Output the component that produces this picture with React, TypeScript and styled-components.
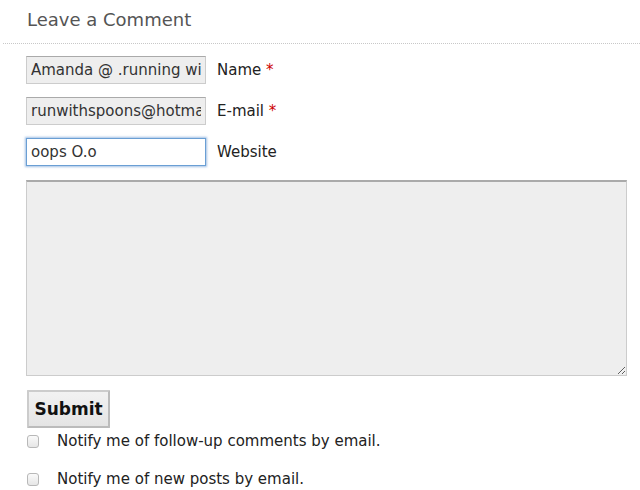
import React from "react";
import styled, { createGlobalStyle } from "styled-components";

const Global = createGlobalStyle`
  html, body { margin: 0; padding: 0; background: #fff; }
  body { font-family: "DejaVu Sans", Verdana, sans-serif; color: #222; }
`;

const Wrap = styled.div`
  width: 640px;
  height: 490px;
  overflow: hidden;
  padding-left: 3px;
  box-sizing: border-box;
`;

const Title = styled.h3`
  margin: 0;
  padding: 9px 0 12px 24px;
  font-size: 18px;
  line-height: 22px;
  font-weight: normal;
  color: #555;
  border-bottom: 1px dotted #c8c8c8;
`;

const Form = styled.form`
  display: flex;
  flex-direction: column;
  padding: 12px 0 0 23px;
`;

const Row = styled.div`
  display: flex;
  align-items: center;
  gap: 11px;
  height: 28px;
  margin-bottom: 13px;
`;

const TextInput = styled.input<{ $focus?: boolean }>`
  box-sizing: border-box;
  width: 180px;
  height: 28px;
  margin: 0;
  padding: 0 4px;
  font-family: "DejaVu Sans", Verdana, sans-serif;
  font-size: 15px;
  color: #333;
  background: ${(p) => (p.$focus ? "#fff" : "#eee")};
  border: 1px solid ${(p) => (p.$focus ? "#6a9fd4" : "#ccc")};
  border-top-color: ${(p) => (p.$focus ? "#6a9fd4" : "#aaa")};
  box-shadow: ${(p) => (p.$focus ? "0 0 2px 1px rgba(100,150,210,0.6)" : "none")};
  outline: none;
`;

const Label = styled.label`
  font-size: 15px;
  color: #222;
`;

const Req = styled.span`
  color: #c00;
`;

const Area = styled.textarea`
  box-sizing: border-box;
  width: 601px;
  height: 196px;
  margin: 1px 0 14px 0;
  background: #eee;
  border: 1px solid #ccc;
  border-top: 2px solid #aaa;
  resize: both;
  font-family: "DejaVu Sans", Verdana, sans-serif;
`;

const Submit = styled.button`
  box-sizing: border-box;
  width: 83px;
  height: 38px;
  margin: 0 0 6px 1px;
  padding: 0;
  font-family: "DejaVu Sans", Verdana, sans-serif;
  font-size: 17px;
  font-weight: bold;
  color: #111;
  background: linear-gradient(#f2f2f2, #e4e4e4);
  border: 2px solid #bbb;
  border-top-color: #ccc;
  border-left-color: #ccc;
  border-radius: 1px;
`;

const Check = styled.div`
  display: flex;
  align-items: center;
  height: 14px;
  margin-left: 1px;
  margin-bottom: 24px;
`;

const Box = styled.span`
  box-sizing: border-box;
  width: 12px;
  height: 13px;
  border: 1px solid #b8b8b8;
  border-radius: 3px;
  background: linear-gradient(#fafafa, #e6e6e6);
  margin-right: 18px;
`;

const CheckText = styled.span`
  font-size: 15px;
  color: #222;
`;

export default function App() {
  return (
    <Wrap>
      <Global />
      <Title>Leave a Comment</Title>
      <Form onSubmit={(e) => e.preventDefault()}>
        <Row>
          <TextInput defaultValue="Amanda @ .running with spoons." />
          <Label>
            Name <Req>*</Req>
          </Label>
        </Row>
        <Row>
          <TextInput defaultValue="runwithspoons@hotmail.com" />
          <Label>
            E-mail <Req>*</Req>
          </Label>
        </Row>
        <Row>
          <TextInput $focus defaultValue="oops O.o" />
          <Label>Website</Label>
        </Row>
        <Area />
        <Submit type="submit">Submit</Submit>
        <Check>
          <Box />
          <CheckText>Notify me of follow-up comments by email.</CheckText>
        </Check>
        <Check>
          <Box />
          <CheckText>Notify me of new posts by email.</CheckText>
        </Check>
      </Form>
    </Wrap>
  );
}
